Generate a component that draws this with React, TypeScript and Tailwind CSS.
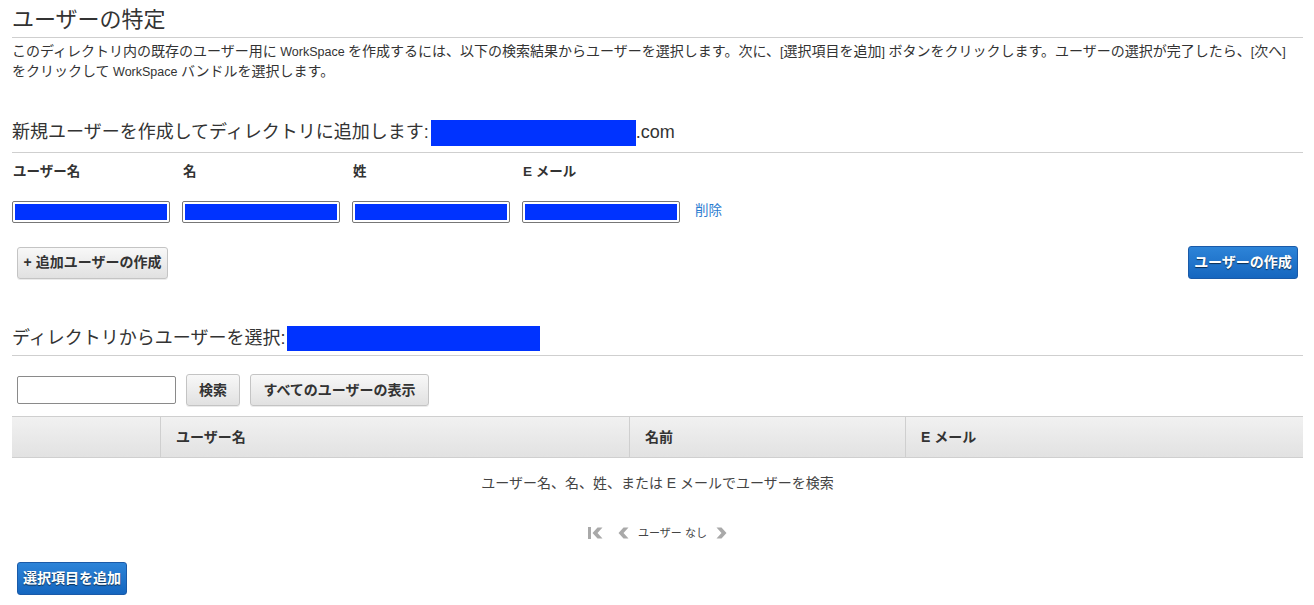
import React from "react";

const font = { fontFamily: '"Liberation Sans", "Noto Sans CJK JP", sans-serif' };

const grayBtn =
  "h-[32px] px-1 rounded-[3px] border border-[#c4c4c4] bg-gradient-to-b from-[#f8f8f8] to-[#e1e1e1] text-[14px] font-bold text-[#333] shadow-[0_1px_0_rgba(0,0,0,0.08)] whitespace-nowrap";
const blueBtn =
  "h-[33px] px-[4px] rounded-[3px] border border-[#1a5aa8] bg-gradient-to-b from-[#2d84d8] to-[#1566bf] text-[14px] font-bold text-white whitespace-nowrap [text-shadow:0_1px_1px_rgba(0,0,0,0.6)]";

// latin words in the help text are narrower than the CJK glyphs around them
const Latin = ({ children }: { children: React.ReactNode }) => (
  <span className="text-[12.5px] leading-none">{children}</span>
);

const BlurField = () => (
  <div className="w-[158px] h-[22px] border border-[#777] rounded-[2px] p-[2px] bg-white">
    <div className="h-full w-full bg-[#0033ff]"></div>
  </div>
);

const PageIcon = ({ d, w = 13 }: { d: string; w?: number }) => (
  <svg width={w} height="14" viewBox={`0 0 ${w} 14`}>
    <path d={d} fill="#a9a9a9" />
  </svg>
);

export default function App() {
  return (
    <div className="w-[1314px] min-h-[605px] bg-white text-[#333] px-3" style={font}>
      <h1 className="text-[22px] leading-[28px] pt-[6px] pb-[3px] border-b border-[#cfcfcf] w-[1291px]">
        ユーザーの特定
      </h1>
      <p className="text-[14px] leading-[20px] mt-[3px] w-[1291px] whitespace-nowrap">
        このディレクトリ内の既存のユーザー用に<Latin> WorkSpace </Latin>を作成するには、以下の検索結果からユーザーを選択します。次に、<Latin>[</Latin>選択項目を追加<Latin>] </Latin>ボタンをクリックします。ユーザーの選択が完了したら、<Latin>[</Latin>次へ<Latin>]</Latin>
        <br />
        をクリックして<Latin> WorkSpace </Latin>バンドルを選択します。
      </p>

      <div className="mt-[38px] w-[1291px] border-b border-[#cfcfcf] pb-[6px] flex items-center text-[18px]">
        <span>新規ユーザーを作成してディレクトリに追加します:</span>
        <span className="inline-block w-[205px] h-[26px] bg-[#0033ff] ml-[2px]"></span>
        <span>.com</span>
      </div>

      <div className="flex mt-[11px] text-[13.5px] font-bold leading-[16px]">
        <div className="w-[170px] pl-[1px]">ユーザー名</div>
        <div className="w-[170px] pl-[1px]">名</div>
        <div className="w-[170px] pl-[1px]">姓</div>
        <div className="w-[170px] pl-[1px]">E メール</div>
      </div>

      <div className="flex items-center mt-[21px] h-[22px]">
        <div className="w-[170px]">
          <BlurField />
        </div>
        <div className="w-[170px]">
          <BlurField />
        </div>
        <div className="w-[170px]">
          <BlurField />
        </div>
        <div className="w-[173px]">
          <BlurField />
        </div>
        <a className="text-[13.5px] text-[#2a7bd0] mb-[2px]">削除</a>
      </div>

      <div className="flex justify-between items-center mt-[23px] w-[1286px] pl-[5px]">
        <button className={`${grayBtn} w-[151px]`}>+ 追加ユーザーの作成</button>
        <button className={`${blueBtn} w-[110px]`}>ユーザーの作成</button>
      </div>

      <div className="mt-[46px] w-[1291px] border-b border-[#cfcfcf] pb-[3px] flex items-center text-[18px]">
        <span>ディレクトリからユーザーを選択:</span>
        <span className="inline-block w-[253px] h-[25px] bg-[#0033ff] ml-[2px]"></span>
      </div>

      <div className="flex items-center gap-[10px] mt-[18px] pl-[5px]">
        <input className="w-[159px] h-[28px] border border-[#8a8a8a] rounded-[2px] bg-white" />
        <button className={`${grayBtn} w-[54px] h-[31px]`}>検索</button>
        <button className={`${grayBtn} w-[179px] h-[31px] text-[13.5px]`}>すべてのユーザーの表示</button>
      </div>

      <div className="mt-[10px] w-[1291px]">
        <div className="flex h-[42px] border-y border-[#cfcfcf] bg-gradient-to-b from-[#f1f1f1] to-[#e2e2e2] text-[14px] font-bold items-stretch">
          <div className="w-[148px]"></div>
          <div className="w-[469px] border-l border-[#cfcfcf] flex items-center pl-[15px]">ユーザー名</div>
          <div className="w-[276px] border-l border-[#cfcfcf] flex items-center pl-[15px]">名前</div>
          <div className="flex-1 border-l border-[#cfcfcf] flex items-center pl-[15px]">E メール</div>
        </div>
        <div className="text-center text-[14px] text-[#444] mt-[16px] leading-[18px]">
          ユーザー名、名、姓、または E メールでユーザーを検索
        </div>
        <div className="flex justify-center items-center mt-[34px] text-[11px] text-[#444] h-[14px]">
          <PageIcon w={16} d="M1 1h3v12H1z M10.5 1.5h5L10.5 7l5 5.5h-5L5.5 7z" />
          <span className="w-[14px]"></span>
          <PageIcon d="M6.5 1.5h5L6.5 7l5 5.5h-5L1.5 7z" />
          <span className="ml-[8px] mr-[8px]">ユーザー なし</span>
          <PageIcon d="M1.5 1.5h5l5 5.5-5 5.5h-5L6.5 7z" />
        </div>
      </div>

      <div className="mt-[22px] pl-[5px] pb-[11px]">
        <button className={`${blueBtn} w-[110px]`}>選択項目を追加</button>
      </div>
    </div>
  );
}
